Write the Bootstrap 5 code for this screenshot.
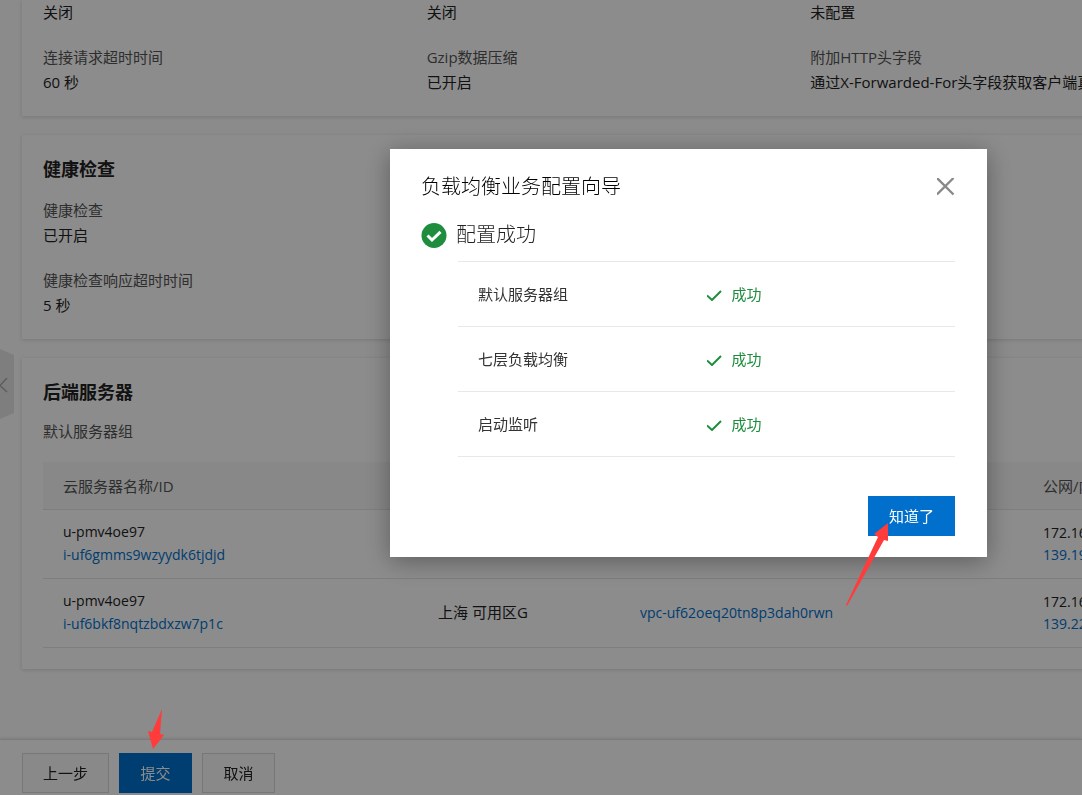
<!DOCTYPE html>
<html lang="zh-CN">
<head>
<meta charset="utf-8">
<meta name="viewport" content="width=device-width, initial-scale=1">
<title>负载均衡业务配置向导</title>
<link rel="stylesheet" href="https://cdn.jsdelivr.net/npm/bootstrap@5.3.0/dist/css/bootstrap.min.css">
<style>
  body { font-family: "Open Sans", "Noto Sans CJK SC", sans-serif; font-size: 15px; line-height: 25px; color: #222; background: #fdfdfd; overflow: hidden; }
  a { color: #0070cc; text-decoration: none; }
  .page-body { min-width: 1215px; padding-left: 22px; }
  .panel { background: #fff; padding: 20px 21px 21px; margin-bottom: 19px; box-shadow: 0 1px 4px rgba(0,0,0,.15); }
  .panel-first { padding-top: 0; }
  .panel h2 { font-size: 18px; line-height: 28px; font-weight: 700; margin-bottom: 15px; }
  .info-grid { row-gap: 20px; margin: 0; }
  .info-grid dt, .group-name { color: #555; font-weight: 400; }
  .info-grid dd { margin: 0; white-space: nowrap; }
  .group-name { line-height: 21px; margin-bottom: 20px; }
  .server-table { table-layout: fixed; width: 100%; line-height: 23px; }
  .server-table th { background: #f7f7f7; color: #555; font-weight: 400; height: 47px; }
  .server-table th, .server-table td { padding: 0 20px; border-bottom: 1px solid #e6e6e6; white-space: nowrap; }
  .server-table th { padding-top: 2px; }
  .server-table td { height: 69px; }
  .server-table .name { padding-bottom: 2px; }
  .server-table .address { line-height: 22px; }
  .latin { font-size: 14px; }
  .drawer-handle { top: 349px; width: 14px; height: 70px; z-index: 5; }
  .action-bar { background: #fff; border-top: 1px solid #e0e0e0; padding: 13px 22px 2px; gap: 10px; box-shadow: 0 -1px 3px rgba(0,0,0,.1); }
  .btn { --bs-btn-border-radius: 0; --bs-btn-padding-x: 20px; --bs-btn-padding-y: 0; --bs-btn-font-size: 15px; --bs-btn-line-height: 38px; min-width: 73px; }
  .btn-primary { --bs-btn-bg: #0070cc; --bs-btn-border-color: #0070cc; }
  .btn-plain { --bs-btn-bg: #fafafa; --bs-btn-border-color: #d9d9d9; --bs-btn-color: #222; }
  .modal-backdrop.show { opacity: .45; }
  .wizard { max-width: 597px; margin: 149px 95px 0 auto; }
  .wizard .modal-content { border: 0; border-radius: 0; padding: 24px 32px 21px 31px; box-shadow: 0 4px 24px rgba(0,0,0,.35); color: #333; }
  .wizard h1 { font-size: 20px; line-height: 28px; font-weight: 300; color: #000; }
  .wizard .close-button { width: 18px; height: 18px; }
  .outcome { font-size: 20px; line-height: 26px; font-weight: 300; gap: 9px; margin: 21px 0 13px; color: #222; }
  .result-block { margin: 0 0 39px 37px; }
  .result-table { width: 100%; table-layout: fixed; border-top: 1px solid #e8e8e8; }
  .result-table th, .result-table td { height: 65px; border-bottom: 1px solid #e8e8e8; padding: 0; font-weight: 400; }
  .result-table th { padding-left: 20px; }
  .result-table td { color: #1e8e3e; }
  .result-table svg { margin-right: 9px; }
  .pointer { z-index: 1070; pointer-events: none; }
  .pointer-submit { left: 146px; bottom: 45px; }
  .pointer-confirm { right: 97px; top: 374px; }
</style>
</head>
<body>
<main class="page-body">
  <section class="panel panel-first">
    <dl class="row g-0 info-grid">
      <div class="col-4"><dd>关闭</dd></div>
      <div class="col-4"><dd>关闭</dd></div>
      <div class="col-4"><dd>未配置</dd></div>
      <div class="col-4"><dt>连接请求超时时间</dt><dd>60 秒</dd></div>
      <div class="col-4"><dt>Gzip数据压缩</dt><dd>已开启</dd></div>
      <div class="col-4"><dt>附加HTTP头字段</dt><dd>通过X-Forwarded-For头字段获取客户端真实IP</dd></div>
    </dl>
  </section>

  <section class="panel">
    <h2>健康检查</h2>
    <dl class="d-grid info-grid">
      <div><dt>健康检查</dt><dd>已开启</dd></div>
      <div><dt>健康检查响应超时时间</dt><dd>5 秒</dd></div>
    </dl>
  </section>

  <section class="panel">
    <h2>后端服务器</h2>
    <div class="group-name">默认服务器组</div>
    <table class="server-table">
      <colgroup><col style="width:375px"><col style="width:202px"><col style="width:403px"><col></colgroup>
      <thead><tr><th>云服务器名称/ID</th><th>地域</th><th>VPC</th><th>公网/内网IP地址</th></tr></thead>
      <tbody>
        <tr>
          <td class="name latin">u-pmv4oe97<br><a href="#">i-uf6gmms9wzyydk6tjdjd</a></td>
          <td></td><td></td>
          <td class="address latin">172.16<br><a href="#">139.19</a></td>
        </tr>
        <tr>
          <td class="name latin">u-pmv4oe97<br><a href="#">i-uf6bkf8nqtzbdxzw7p1c</a></td>
          <td>上海 可用区G</td>
          <td class="latin"><a href="#">vpc-uf62oeq20tn8p3dah0rwn</a></td>
          <td class="address latin">172.16<br><a href="#">139.22</a></td>
        </tr>
      </tbody>
    </table>
  </section>
</main>

<button type="button" class="drawer-handle position-fixed start-0 border-0 p-0 bg-transparent d-flex" aria-label="展开">
  <svg width="14" height="70" viewBox="0 0 14 70"><path d="M0 0 14 6V64L0 70Z" fill="#e6e6e6"/><path d="M7 29 0 36.500 7 43" fill="none" stroke="#aaa" stroke-width="1.500"/></svg>
</button>

<footer class="action-bar fixed-bottom d-flex">
  <button type="button" class="btn btn-plain">上一步</button>
  <button type="button" class="btn btn-primary">提交</button>
  <button type="button" class="btn btn-plain">取消</button>
</footer>

<div class="modal-backdrop show"></div>
<div class="modal d-block" role="dialog" aria-modal="true" aria-labelledby="wizardTitle">
  <div class="modal-dialog wizard">
    <div class="modal-content">
      <div class="d-flex justify-content-between align-items-center">
        <h1 id="wizardTitle" class="mb-0">负载均衡业务配置向导</h1>
        <button type="button" class="close-button border-0 p-0 bg-transparent d-flex" aria-label="关闭">
          <svg width="18" height="18" viewBox="0 0 18 18"><path d="M0 0 16.500 16.500M16.500 0 0 16.500" stroke="#888" stroke-width="2.300"/></svg>
        </button>
      </div>
      <div class="outcome d-flex align-items-center">
        <svg width="26" height="26" viewBox="0 0 26 26"><circle cx="13" cy="13.500" r="12.500" fill="#1e8e3e"/><path d="M6.500 13.500 11 18 19.500 9.800" fill="none" stroke="#fff" stroke-width="3"/></svg>
        <span>配置成功</span>
      </div>
      <div class="result-block">
        <table class="result-table">
          <tbody>
            <tr><th scope="row">默认服务器组</th><td><svg width="16" height="12" viewBox="0 0 16 12"><path d="M0 6.500 5 11 14 2" fill="none" stroke="#1e8e3e" stroke-width="2"/></svg>成功</td></tr>
            <tr><th scope="row">七层负载均衡</th><td><svg width="16" height="12" viewBox="0 0 16 12"><path d="M0 6.500 5 11 14 2" fill="none" stroke="#1e8e3e" stroke-width="2"/></svg>成功</td></tr>
            <tr><th scope="row">启动监听</th><td><svg width="16" height="12" viewBox="0 0 16 12"><path d="M0 6.500 5 11 14 2" fill="none" stroke="#1e8e3e" stroke-width="2"/></svg>成功</td></tr>
          </tbody>
        </table>
      </div>
      <div class="d-flex justify-content-end">
        <button type="button" class="btn btn-primary">知道了</button>
      </div>
      <svg class="pointer pointer-confirm position-absolute" width="44" height="84" viewBox="0 0 44 84" overflow="visible"><path d="M42 0 28 11 32 14 0 82 1 83 38 17 42 18Z" fill="#ff3b3b"/></svg>
    </div>
  </div>
</div>
<svg class="pointer pointer-submit position-fixed" width="20" height="42" viewBox="0 0 20 42"><path d="M16 1 6 24 2 23 7 41 18 27 14 26Z" fill="#ff3b3b"/></svg>
<script src="https://cdn.jsdelivr.net/npm/bootstrap@5.3.0/dist/js/bootstrap.bundle.min.js"></script>
</body>
</html>
